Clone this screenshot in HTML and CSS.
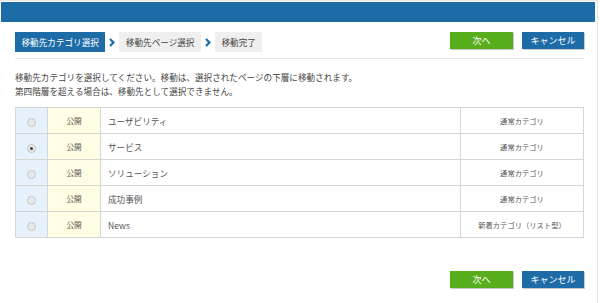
FILE: index.html
```html
<!DOCTYPE html>
<html lang="ja">
  <head>
    <meta charset="UTF-8" />
    <title>移動先カテゴリ選択</title>
    <link rel="stylesheet" href="styles.css">
  </head>
  <body>
    <div class="window">
      <div class="titlebar"></div>
      <div class="content">
        <div class="toolbar">
          <ol class="steps">
            <li class="step current">移動先カテゴリ選択</li>
            <li class="sep"><svg width="6" height="9" viewBox="0 0 6 9"><path d="M1 1l3.5 3.5L1 8" fill="none" stroke="#1d6aa5" stroke-width="2.2"/></svg></li>
            <li class="step">移動先ページ選択</li>
            <li class="sep"><svg width="6" height="9" viewBox="0 0 6 9"><path d="M1 1l3.5 3.5L1 8" fill="none" stroke="#1d6aa5" stroke-width="2.2"/></svg></li>
            <li class="step">移動完了</li>
          </ol>
          <div class="actions">
            <button class="btn next">次へ</button>
            <button class="btn cancel">キャンセル</button>
          </div>
        </div>
        <p class="note">移動先カテゴリを選択してください。移動は、選択されたページの下層に移動されます。<br>第四階層を超える場合は、移動先として選択できません。</p>
        <table class="list">
          <tbody>
            <tr>
              <td class="pick"><span class="radio"></span></td>
              <td class="status">公開</td>
              <td class="name">ユーザビリティ</td>
              <td class="type">通常カテゴリ</td>
            </tr>
            <tr>
              <td class="pick"><span class="radio on"></span></td>
              <td class="status">公開</td>
              <td class="name">サービス</td>
              <td class="type">通常カテゴリ</td>
            </tr>
            <tr>
              <td class="pick"><span class="radio"></span></td>
              <td class="status">公開</td>
              <td class="name">ソリューション</td>
              <td class="type">通常カテゴリ</td>
            </tr>
            <tr>
              <td class="pick"><span class="radio"></span></td>
              <td class="status">公開</td>
              <td class="name">成功事例</td>
              <td class="type">通常カテゴリ</td>
            </tr>
            <tr>
              <td class="pick"><span class="radio"></span></td>
              <td class="status">公開</td>
              <td class="name">News</td>
              <td class="type">新着カテゴリ（リスト型）</td>
            </tr>
          </tbody>
        </table>
        <div class="actions bottom">
          <button class="btn next">次へ</button>
          <button class="btn cancel">キャンセル</button>
        </div>
      </div>
    </div>
  </body>
</html>
```

FILE: styles.css
```css
html,
body {
  margin: 0;
  padding: 0;
  background: #fff;
  font-family: 'Noto Sans CJK JP', 'Noto Sans', sans-serif;
  color: #333;
}
.window {
  height: 303px;
  box-sizing: border-box;
  padding: 2px 2px 0 1px;
  border-top: 1px solid #e8e8e8;
  border-right: 1px solid #e4e4e4;
  margin-right: 2px;
}
.titlebar {
  height: 20px;
  background: #1d6ca8;
  margin-top: -1px;
}
.content {
  padding: 0 11px 0 14px;
}
.toolbar {
  display: flex;
  justify-content: space-between;
  align-items: flex-start;
  margin-top: 10px;
  padding-bottom: 6px;
  border-bottom: 1px solid #e6e6e6;
}
.steps {
  display: flex;
  align-items: center;
  list-style: none;
  margin: 0;
  padding: 0;
}
.step {
  height: 20px;
  line-height: 20px;
  font-size: 8.6px;
  background: #efefef;
  color: #444;
  padding: 0 6.5px;
}
.step.current {
  background: #1d6ca8;
  color: #fff;
}
.sep {
  width: 14px;
  display: flex;
  justify-content: center;
  align-items: center;
  height: 20px;
}
.actions {
  display: flex;
  gap: 9px;
}
.btn {
  height: 17px;
  border: 0;
  padding: 0;
  font-family: inherit;
  font-size: 9px;
  color: #fff;
  box-shadow: 1px 1px 0 #c8c8c8;
  cursor: pointer;
}
.btn.next {
  width: 63px;
  background: #58ad1c;
}
.btn.cancel {
  width: 62px;
  background: #1d6ca8;
}
.note {
  margin: 11px 0 0 0;
  font-size: 8.6px;
  line-height: 14px;
  color: #444;
}
.list {
  width: 100%;
  margin-top: 9px;
  border-collapse: collapse;
  font-size: 8.6px;
  color: #555;
}
.list td {
  height: 25px;
  padding: 0;
  border: 1px solid #d6d6d6;
}
.pick {
  width: 31px;
  background: #e7f1fb;
  text-align: center;
}
.status {
  width: 52px;
  background: #fffde3;
  text-align: center;
  font-size: 7.6px;
}
.name {
  padding-left: 7px !important;
}
.type {
  width: 122px;
  text-align: center;
  font-size: 7.3px;
}
.radio {
  display: inline-block;
  width: 7px;
  height: 7px;
  border-radius: 50%;
  border: 1px solid #c4c4c4;
  background: #e9e9e9;
  vertical-align: middle;
  position: relative;
}
.radio.on::after {
  content: '';
  position: absolute;
  left: 2px;
  top: 2px;
  width: 3px;
  height: 3px;
  border-radius: 50%;
  background: #444;
}
.actions.bottom {
  justify-content: flex-end;
  margin-top: 33px;
}
```
